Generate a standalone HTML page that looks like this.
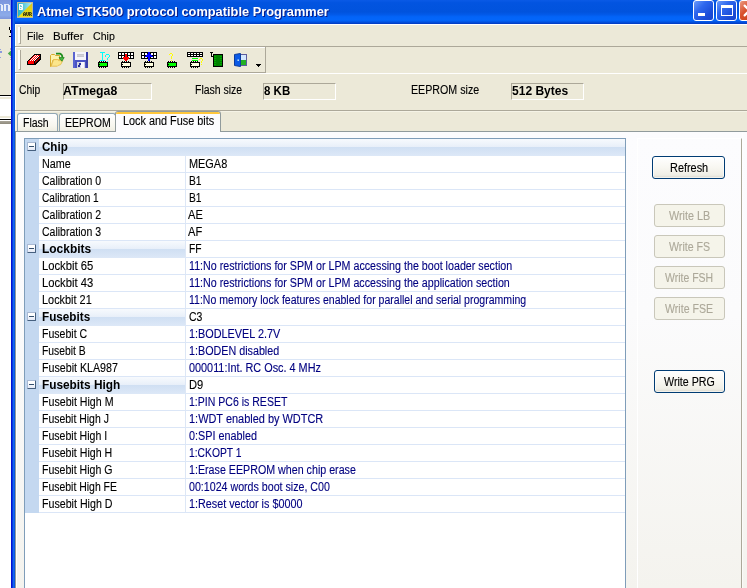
<!DOCTYPE html>
<html><head><meta charset="utf-8"><title>Atmel STK500 protocol compatible Programmer</title>
<style>
*{margin:0;padding:0;box-sizing:border-box}
html,body{width:747px;height:588px;overflow:hidden;background:#ece9d8;font-family:"Liberation Sans",sans-serif;font-size:11px;color:#000}
.a{position:absolute}
.t{position:absolute;white-space:pre;transform-origin:0 50%;-webkit-text-stroke:.12px}
#tx{left:0;top:0;width:747px;height:588px;will-change:transform}
.ttl{text-shadow:1px 1px 0 #0a1883}
#bgt{left:0;top:0;width:11px;height:19px;background:linear-gradient(#7b95dd,#84a1e5 45%,#8cabe9 80%,#7d95da)}
#title{left:11px;top:0;width:736px;height:24px;background:linear-gradient(#0a5ae6 0,#0254e0 12%,#0153dd 50%,#0259e8 60%,#0364f8 70%,#0366fa 84%,#0252e0 92%,#0238c0 100%)}
#lb{left:11px;top:0;width:4px;height:588px;background:linear-gradient(90deg,#0012d4 0,#0012d4 25%,#0838e0 25%,#0838e0 50%,#1566ee 50%,#1566ee 75%,#0a58e2 75%)}
.hl{background:#fff}.sh{background:#aca899}
.grip{width:3px;border-left:2px solid #fff;border-right:1px solid #aca899;border-bottom:1px solid #aca899}
.fld{height:17px;border:1px solid;border-color:#aca899 #fff #fff #aca899}
.tab{border:1px solid #91a7b4;border-bottom:none;border-radius:3px 3px 0 0;background:linear-gradient(#fff,#f7f6ee 70%,#efeee2)}
.cb{top:0;width:21px;height:21px;border:1px solid #fff;border-radius:3px}
.gl{left:39px;width:586px;height:1px;background:#dbe6f7}
.hd{left:39px;width:146px;height:17px;background:linear-gradient(#f7fafd 0,#e8eff9 46%,#cfdff3 47%,#dde8f7 100%)}
.hd.full{width:586px}
.pm{left:27px;width:9px;height:9px;border:1px solid;border-color:#a9b9d3 #46607f #46607f #a9b9d3;border-radius:1px;background:linear-gradient(#fff 30%,#e3e9f6)}
.pm i{position:absolute;left:1px;top:3px;width:5px;height:1px;background:#34506f}
.btn{height:23px;border-radius:3px}
.btn.on{border:1px solid #003c74;background:linear-gradient(#fff,#f8f7f1 50%,#efeee6 86%,#dad7cb);box-shadow:inset 0 0 0 1px rgba(255,255,255,.6)}
.btn.off{border:1px solid #c9c7ba;background:#f5f4ea}
svg{position:absolute;overflow:visible}
</style></head><body>
<div class="a" id="bgt"></div>
<div class="a" style="left:1px;top:5px;width:2px;height:6px;background:#e6ecfa"></div>
<div class="a" style="left:0;top:4px;width:2px;height:1px;background:#d6e0f6"></div>
<div class="a" style="left:4px;top:4px;width:2px;height:7px;background:#e6ecfa"></div>
<div class="a" style="left:6px;top:4px;width:3px;height:1px;background:#dce4f8"></div>
<div class="a" style="left:8px;top:5px;width:2px;height:6px;background:#e6ecfa"></div>
<div class="a" style="left:10px;top:19px;width:1px;height:76px;background:#f6f1de"></div>
<div class="a" style="left:9px;top:27px;width:1px;height:3px;background:#000"></div>
<div class="a" style="left:10px;top:30px;width:1px;height:3px;background:#000"></div>
<div class="a" style="left:9px;top:36px;width:2px;height:1px;background:#000"></div>
<svg class="a" style="left:0;top:44px" width="11" height="20" viewBox="0 44 11 20"><polygon points="11,50.5 7.8,53.5 11,56.5" fill="#4aa84a"/><rect x="0" y="49" width="1" height="1" fill="#98a4dc"/><rect x="0" y="51" width="2" height="2" fill="#8c9ade"/><rect x="0" y="57" width="1" height="1" fill="#98a4dc"/><rect x="10" y="48" width="1" height="2" fill="#b8b4a4"/><rect x="10" y="57" width="1" height="1" fill="#b8b4a4"/><rect x="10" y="59" width="1" height="1" fill="#b8b4a4"/></svg>
<div class="a" style="left:0;top:95px;width:11px;height:493px;background:#fff"></div>
<div class="a" style="left:0;top:95px;width:11px;height:1px;background:#000"></div>
<div class="a" style="left:0;top:97px;width:11px;height:2px;background:#ece9d8"></div>
<div class="a" style="left:0;top:116px;width:11px;height:2px;background:#ece9d8"></div>
<div class="a" style="left:0;top:119px;width:11px;height:1px;background:#000"></div>
<div class="a" style="left:0;top:121px;width:11px;height:3px;background:linear-gradient(#aaa69a,#8e8a7c)"></div>
<div class="a" id="title"></div>
<div class="a" id="lb"></div>
<div class="a hl" style="left:15px;top:24px;width:732px;height:1px"></div>
<div class="a hl" style="left:15px;top:24px;width:1px;height:564px"></div>
<!-- caption buttons -->
<div class="a cb" style="left:693px;background:linear-gradient(135deg,#6c9cfa 0,#2f68ee 35%,#1a4cd8 75%,#1a44cc)"><div class="a" style="left:4px;top:12px;width:7px;height:3px;background:#fff"></div></div>
<div class="a cb" style="left:716px;background:linear-gradient(135deg,#6c9cfa 0,#2f68ee 35%,#1a4cd8 75%,#1a44cc)"><div class="a" style="left:4px;top:4px;width:12px;height:11px;border:1px solid #fff;border-top-width:3px"></div></div>
<div class="a cb" style="left:739px;background:linear-gradient(135deg,#ec9a82,#d8502c 40%,#c23a12)"></div>
<svg class="a" style="left:739px;top:0" width="8" height="21" viewBox="739 0 8 21"><path d="M744.6 5.6 L754 15 M744.6 15.4 L754 6" stroke="#fff" stroke-width="2.2" stroke-linecap="round"/></svg>
<!-- menu bar -->
<div class="a grip" style="left:18px;top:27px;height:17px"></div>
<div class="a sh" style="left:15px;top:46px;width:732px;height:1px"></div>
<div class="a hl" style="left:15px;top:47px;width:250px;height:1px"></div>
<!-- toolbar -->
<div class="a grip" style="left:18px;top:50px;height:20px"></div>
<div class="a sh" style="left:15px;top:72px;width:251px;height:1px"></div>
<div class="a hl" style="left:15px;top:73px;width:732px;height:1px"></div>
<div class="a sh" style="left:265px;top:47px;width:1px;height:26px"></div>
<!-- info fields -->
<div class="a fld" style="left:63px;top:83px;width:89px"></div>
<div class="a fld" style="left:263px;top:83px;width:73px"></div>
<div class="a fld" style="left:511px;top:83px;width:73px"></div>
<!-- tab control -->
<div class="a" style="left:15px;top:110px;width:732px;height:1px;background:#aca899"></div>
<div class="a" style="left:15px;top:111px;width:732px;height:1px;background:#f5f3e6"></div>
<div class="a" style="left:15px;top:111px;width:2px;height:20px;background:#f6f0da"></div>
<div class="a" style="left:15px;top:131px;width:732px;height:457px;background:linear-gradient(#fcfcfe,#fbfbfc 40%,#f4f3ee);border-top:1px solid #919b9c;border-left:1px solid #919b9c"></div>
<div class="a hl" style="left:16px;top:132px;width:1px;height:456px"></div>
<div class="a tab" style="left:17px;top:113px;width:41px;height:18px"></div>
<div class="a tab" style="left:59px;top:113px;width:57px;height:18px"></div>
<div class="a" style="left:115px;top:111px;width:106px;height:21px;border:1px solid #919b9c;border-bottom:none;border-radius:3px 3px 0 0;background:#fcfcfe;overflow:hidden"><div class="a" style="left:-1px;top:-1px;width:106px;height:3px;background:linear-gradient(#e68b2c 0,#e68b2c 34%,#ffc73c 34%)"></div></div>
<svg class="a" style="left:0;top:0" width="747" height="80" viewBox="0 0 747 80" shape-rendering="crispEdges">
<defs><linearGradient id="tq" x1="0" y1="0" x2="1" y2="0"><stop offset="0" stop-color="#22b4c6"/><stop offset="1" stop-color="#b4ecf4"/></linearGradient><linearGradient id="yl" x1="0" y1="0" x2="0" y2="1"><stop offset="0" stop-color="#d8c818"/><stop offset="1" stop-color="#ece018"/></linearGradient></defs>
<rect x="17" y="2" width="16" height="16" fill="#bcb89c"/>
<rect x="18" y="3" width="14" height="14" fill="url(#yl)"/>
<polygon points="18,3 32,3 18,17" fill="url(#tq)" shape-rendering="geometricPrecision"/>
<rect x="19" y="4" width="3" height="1" fill="#ffffff"/>
<rect x="22" y="4" width="1" height="1" fill="#e0f4f8"/>
<rect x="19" y="5" width="1" height="1" fill="#ffffff"/>
<rect x="20" y="5" width="1" height="1" fill="#7ac8d4"/>
<rect x="21" y="5" width="1" height="1" fill="#e0f4f8"/>
<rect x="22" y="5" width="1" height="1" fill="#ffffff"/>
<rect x="19" y="6" width="1" height="1" fill="#ffffff"/>
<rect x="20" y="6" width="2" height="1" fill="#7ac8d4"/>
<rect x="22" y="6" width="1" height="1" fill="#ffffff"/>
<rect x="19" y="7" width="3" height="1" fill="#ffffff"/>
<rect x="22" y="7" width="1" height="1" fill="#e0f4f8"/>
<rect x="19" y="8" width="1" height="1" fill="#ffffff"/>
<rect x="20" y="8" width="1" height="1" fill="#7ac8d4"/>
<rect x="21" y="8" width="1" height="1" fill="#e0f4f8"/>
<rect x="22" y="8" width="1" height="1" fill="#ffffff"/>
<rect x="19" y="9" width="3" height="1" fill="#ffffff"/>
<rect x="22" y="9" width="1" height="1" fill="#e0f4f8"/>
<rect x="23" y="12" width="9" height="4" fill="#5a5610" fill-opacity=".35"/>
<rect x="24" y="12" width="1" height="1" fill="#4a4812"/>
<rect x="26" y="12" width="1" height="1" fill="#4a4812"/>
<rect x="28" y="12" width="1" height="1" fill="#4a4812"/>
<rect x="29" y="12" width="2" height="1" fill="#4a4812"/>
<rect x="23" y="13" width="1" height="1" fill="#4a4812"/>
<rect x="25" y="13" width="1" height="1" fill="#4a4812"/>
<rect x="26" y="13" width="1" height="1" fill="#4a4812"/>
<rect x="28" y="13" width="1" height="1" fill="#4a4812"/>
<rect x="29" y="13" width="1" height="1" fill="#4a4812"/>
<rect x="31" y="13" width="1" height="1" fill="#4a4812"/>
<rect x="23" y="14" width="3" height="1" fill="#4a4812"/>
<rect x="26" y="14" width="1" height="1" fill="#4a4812"/>
<rect x="28" y="14" width="1" height="1" fill="#4a4812"/>
<rect x="29" y="14" width="2" height="1" fill="#4a4812"/>
<rect x="23" y="15" width="1" height="1" fill="#4a4812"/>
<rect x="25" y="15" width="1" height="1" fill="#4a4812"/>
<rect x="27" y="15" width="1" height="1" fill="#4a4812"/>
<rect x="29" y="15" width="1" height="1" fill="#4a4812"/>
<rect x="31" y="15" width="1" height="1" fill="#4a4812"/>
<polygon points="34,54 41,54 41,59 35,65 27,65 27,61" fill="#000"/>
<polygon points="35,55 40,55 34,61 28,61" fill="#ff0000"/>
<rect x="28" y="61" width="6" height="3" fill="#ff0000"/>
<polygon points="35,61.5 40,56.5 40,58 35,63.5" fill="#a80000"/>
<rect x="35" y="55" width="1" height="1" fill="#fff"/>
<rect x="37" y="55" width="1" height="1" fill="#fff"/>
<rect x="34" y="56" width="1" height="1" fill="#fff"/>
<rect x="36" y="56" width="1" height="1" fill="#fff"/>
<rect x="38" y="56" width="1" height="1" fill="#fff"/>
<rect x="33" y="57" width="1" height="1" fill="#fff"/>
<rect x="35" y="57" width="1" height="1" fill="#fff"/>
<rect x="37" y="57" width="1" height="1" fill="#fff"/>
<rect x="32" y="58" width="1" height="1" fill="#fff"/>
<rect x="34" y="58" width="1" height="1" fill="#fff"/>
<rect x="36" y="58" width="1" height="1" fill="#fff"/>
<rect x="31" y="59" width="1" height="1" fill="#fff"/>
<rect x="33" y="59" width="1" height="1" fill="#fff"/>
<rect x="35" y="59" width="1" height="1" fill="#fff"/>
<rect x="30" y="60" width="1" height="1" fill="#fff"/>
<rect x="32" y="60" width="1" height="1" fill="#fff"/>
<rect x="34" y="60" width="1" height="1" fill="#fff"/>
<g shape-rendering="geometricPrecision">
<path d="M50.5 66.5 L50.5 55.5 L51.5 54.5 L54.5 54.5 L55.5 55.5 L59.5 55.5 L59.5 60 L53 60 L51 66.5 Z" fill="#fdf2b0" stroke="#d6aa2c" stroke-width="1"/>
<path d="M51.2 66.2 L53.6 59.6 L57.6 59.6 L58.6 60.6 L62.8 60.6 L60.6 64.6 L58.2 65.4 L57.4 66.2 Z" fill="#fbe68c" stroke="#e6bc4c" stroke-width=".9"/>
<path d="M56 53.6 L60 53.6 Q62.4 54.4 62.4 57.6" fill="none" stroke="#1c8c1c" stroke-width="1.7"/>
<path d="M59.2 57.6 L64.2 57.6 L61.8 61.2 Z" fill="#48bc44" stroke="#1c861c" stroke-width=".8"/>
</g>
<g shape-rendering="geometricPrecision"><rect x="73" y="52" width="15" height="16" rx="1.5" fill="#4a54c4"/>
<rect x="73" y="52" width="2" height="16" fill="#5a64d0"/><rect x="86" y="52" width="2" height="16" fill="#3a40aa"/></g>
<rect x="75" y="52" width="11" height="8" fill="#f4f4fa"/>
<rect x="77" y="54" width="7" height="3" fill="#c6c6d0"/>
<rect x="77" y="55" width="7" height="1" fill="#d2d2da"/>
<rect x="77" y="62" width="8" height="6" fill="#d4d4e2"/>
<polygon points="79,62.5 81,62.5 80,66.5 78,66.5" fill="#2c329c"/>
<rect x="81" y="62" width="3" height="6" fill="#f8f8ff"/>
<rect x="100" y="52" width="5" height="1" fill="#00ffff"/>
<rect x="102" y="53" width="1" height="7" fill="#00ffff"/>
<rect x="100" y="60" width="5" height="1" fill="#00ffff"/>
<rect x="106" y="54" width="3" height="1" fill="#00ffff"/>
<rect x="105" y="55" width="1" height="1" fill="#00ffff"/>
<rect x="109" y="55" width="1" height="1" fill="#00ffff"/>
<rect x="105" y="56" width="1" height="1" fill="#00ffff"/>
<rect x="109" y="56" width="1" height="1" fill="#00ffff"/>
<rect x="108" y="57" width="1" height="1" fill="#00ffff"/>
<rect x="107" y="58" width="1" height="1" fill="#00ffff"/>
<rect x="107" y="59" width="1" height="1" fill="#00ffff"/>
<rect x="107" y="61" width="1" height="1" fill="#00ffff"/>
<rect x="98" y="62" width="10" height="5" fill="#000"/>
<rect x="99" y="61" width="1" height="1" fill="#000"/>
<rect x="99" y="67" width="1" height="1" fill="#000"/>
<rect x="101" y="61" width="1" height="1" fill="#000"/>
<rect x="101" y="67" width="1" height="1" fill="#000"/>
<rect x="103" y="61" width="1" height="1" fill="#000"/>
<rect x="103" y="67" width="1" height="1" fill="#000"/>
<rect x="105" y="61" width="1" height="1" fill="#000"/>
<rect x="105" y="67" width="1" height="1" fill="#000"/>
<rect x="99" y="63" width="8" height="3" fill="#00ff00"/>
<rect x="99" y="64" width="1" height="1" fill="#000"/>
<rect x="118" y="52" width="16" height="7" fill="#000"/>
<rect x="119" y="53" width="2" height="2" fill="#fff"/>
<rect x="119" y="56" width="2" height="2" fill="#fff"/>
<rect x="122" y="53" width="2" height="2" fill="#fff"/>
<rect x="122" y="56" width="2" height="2" fill="#fff"/>
<rect x="125" y="53" width="2" height="2" fill="#fff"/>
<rect x="125" y="56" width="2" height="2" fill="#fff"/>
<rect x="128" y="53" width="2" height="2" fill="#fff"/>
<rect x="128" y="56" width="2" height="2" fill="#fff"/>
<rect x="131" y="53" width="2" height="2" fill="#fff"/>
<rect x="131" y="56" width="2" height="2" fill="#fff"/>
<rect x="125" y="54" width="2" height="3" fill="#ff0000"/>
<rect x="123" y="57" width="6" height="1" fill="#ff0000"/>
<rect x="123" y="58" width="6" height="1" fill="#ff0000"/>
<rect x="124" y="59" width="4" height="1" fill="#ff0000"/>
<rect x="125" y="60" width="2" height="1" fill="#ff0000"/>
<rect x="121" y="62" width="10" height="5" fill="#000"/>
<rect x="122" y="61" width="1" height="1" fill="#000"/>
<rect x="122" y="67" width="1" height="1" fill="#000"/>
<rect x="124" y="61" width="1" height="1" fill="#000"/>
<rect x="124" y="67" width="1" height="1" fill="#000"/>
<rect x="126" y="61" width="1" height="1" fill="#000"/>
<rect x="126" y="67" width="1" height="1" fill="#000"/>
<rect x="128" y="61" width="1" height="1" fill="#000"/>
<rect x="128" y="67" width="1" height="1" fill="#000"/>
<rect x="122" y="63" width="8" height="3" fill="#ffffe1"/>
<rect x="122" y="64" width="1" height="1" fill="#000"/>
<rect x="141" y="52" width="16" height="7" fill="#000"/>
<rect x="142" y="53" width="2" height="2" fill="#fff"/>
<rect x="142" y="56" width="2" height="2" fill="#fff"/>
<rect x="145" y="53" width="2" height="2" fill="#fff"/>
<rect x="145" y="56" width="2" height="2" fill="#fff"/>
<rect x="148" y="53" width="2" height="2" fill="#fff"/>
<rect x="148" y="56" width="2" height="2" fill="#fff"/>
<rect x="151" y="53" width="2" height="2" fill="#fff"/>
<rect x="151" y="56" width="2" height="2" fill="#fff"/>
<rect x="154" y="53" width="2" height="2" fill="#fff"/>
<rect x="154" y="56" width="2" height="2" fill="#fff"/>
<rect x="148" y="52" width="2" height="1" fill="#0000ff"/>
<rect x="148" y="53" width="2" height="1" fill="#0000ff"/>
<rect x="147" y="54" width="4" height="1" fill="#0000ff"/>
<rect x="146" y="55" width="6" height="1" fill="#0000ff"/>
<rect x="145" y="56" width="8" height="1" fill="#0000ff"/>
<rect x="148" y="57" width="2" height="4" fill="#0000ff"/>
<rect x="144" y="62" width="10" height="5" fill="#000"/>
<rect x="145" y="61" width="1" height="1" fill="#000"/>
<rect x="145" y="67" width="1" height="1" fill="#000"/>
<rect x="147" y="61" width="1" height="1" fill="#000"/>
<rect x="147" y="67" width="1" height="1" fill="#000"/>
<rect x="149" y="61" width="1" height="1" fill="#000"/>
<rect x="149" y="67" width="1" height="1" fill="#000"/>
<rect x="151" y="61" width="1" height="1" fill="#000"/>
<rect x="151" y="67" width="1" height="1" fill="#000"/>
<rect x="145" y="63" width="8" height="3" fill="#ffffe1"/>
<rect x="145" y="64" width="1" height="1" fill="#000"/>
<rect x="170" y="53" width="2" height="1" fill="#ffff00"/>
<rect x="169" y="54" width="1" height="1" fill="#ffff00"/>
<rect x="172" y="54" width="1" height="1" fill="#ffff00"/>
<rect x="172" y="55" width="1" height="1" fill="#ffff00"/>
<rect x="171" y="56" width="1" height="1" fill="#ffff00"/>
<rect x="171" y="57" width="1" height="1" fill="#ffff00"/>
<rect x="171" y="58" width="1" height="1" fill="#ffff00"/>
<rect x="171" y="60" width="1" height="1" fill="#ffff00"/>
<rect x="167" y="62" width="10" height="5" fill="#000"/>
<rect x="168" y="61" width="1" height="1" fill="#000"/>
<rect x="168" y="67" width="1" height="1" fill="#000"/>
<rect x="170" y="61" width="1" height="1" fill="#000"/>
<rect x="170" y="67" width="1" height="1" fill="#000"/>
<rect x="172" y="61" width="1" height="1" fill="#000"/>
<rect x="172" y="67" width="1" height="1" fill="#000"/>
<rect x="174" y="61" width="1" height="1" fill="#000"/>
<rect x="174" y="67" width="1" height="1" fill="#000"/>
<rect x="168" y="63" width="8" height="3" fill="#00ff00"/>
<rect x="168" y="64" width="1" height="1" fill="#000"/>
<rect x="187" y="52" width="16" height="5" fill="#000"/>
<rect x="188" y="53" width="2" height="1" fill="#fff"/>
<rect x="188" y="55" width="2" height="1" fill="#fff"/>
<rect x="191" y="53" width="2" height="1" fill="#fff"/>
<rect x="191" y="55" width="2" height="1" fill="#fff"/>
<rect x="194" y="53" width="2" height="1" fill="#fff"/>
<rect x="194" y="55" width="2" height="1" fill="#fff"/>
<rect x="197" y="53" width="2" height="1" fill="#fff"/>
<rect x="197" y="55" width="2" height="1" fill="#fff"/>
<rect x="200" y="53" width="2" height="1" fill="#fff"/>
<rect x="200" y="55" width="2" height="1" fill="#fff"/>
<rect x="192" y="58" width="6" height="1" fill="#00ff00"/>
<rect x="192" y="60" width="6" height="1" fill="#00ff00"/>
<rect x="190" y="62" width="10" height="5" fill="#000"/>
<rect x="191" y="61" width="1" height="1" fill="#000"/>
<rect x="191" y="67" width="1" height="1" fill="#000"/>
<rect x="193" y="61" width="1" height="1" fill="#000"/>
<rect x="193" y="67" width="1" height="1" fill="#000"/>
<rect x="195" y="61" width="1" height="1" fill="#000"/>
<rect x="195" y="67" width="1" height="1" fill="#000"/>
<rect x="197" y="61" width="1" height="1" fill="#000"/>
<rect x="197" y="67" width="1" height="1" fill="#000"/>
<rect x="191" y="63" width="8" height="3" fill="#ffffe1"/>
<rect x="191" y="64" width="1" height="1" fill="#000"/>
<rect x="200" y="58" width="2" height="1" fill="#ffff00"/>
<rect x="199" y="59" width="1" height="1" fill="#ffff00"/>
<rect x="202" y="59" width="1" height="1" fill="#ffff00"/>
<rect x="202" y="60" width="1" height="1" fill="#ffff00"/>
<rect x="201" y="61" width="1" height="1" fill="#ffff00"/>
<rect x="201" y="62" width="1" height="1" fill="#ffff00"/>
<rect x="201" y="64" width="1" height="1" fill="#ffff00"/>
<rect x="210" y="52" width="3" height="1" fill="#000"/>
<rect x="211" y="53" width="1" height="4" fill="#000"/>
<rect x="211" y="56" width="2" height="1" fill="#000"/>
<rect x="213" y="54" width="10" height="13" fill="#000"/>
<rect x="214" y="55" width="8" height="11" fill="#008000"/>
<rect x="214" y="56" width="2" height="1" fill="#00a800"/>
<rect x="220" y="56" width="2" height="1" fill="#00a800"/>
<rect x="214" y="58" width="2" height="1" fill="#00a800"/>
<rect x="220" y="58" width="2" height="1" fill="#00a800"/>
<rect x="214" y="60" width="2" height="1" fill="#00a800"/>
<rect x="220" y="60" width="2" height="1" fill="#00a800"/>
<rect x="214" y="62" width="2" height="1" fill="#00a800"/>
<rect x="220" y="62" width="2" height="1" fill="#00a800"/>
<rect x="214" y="64" width="2" height="1" fill="#00a800"/>
<rect x="220" y="64" width="2" height="1" fill="#00a800"/>
<g shape-rendering="geometricPrecision">
<rect x="240.5" y="54.5" width="6" height="11" fill="#d4e8ff" stroke="#5c5c9c" stroke-width="1"/>
<rect x="241" y="60" width="5" height="5" fill="#22b022"/>
<path d="M234.5 54.5 L240.5 53.5 L240.5 66.5 L234.5 65.5 Z" fill="#0a5ae6" stroke="#0c3c9c" stroke-width="1"/>
<rect x="237.5" y="59.5" width="1.4" height="1.4" fill="#dff"/>
</g>
<rect x="256" y="64" width="5" height="1" fill="#000"/>
<rect x="257" y="65" width="3" height="1" fill="#000"/>
<rect x="258" y="66" width="1" height="1" fill="#000"/>
</svg>
<!-- property grid -->
<div class="a" style="left:24px;top:138px;width:602px;height:460px;border:1px solid #7f9db9;background:#fff"></div>
<div class="a" style="left:25px;top:139px;width:14px;height:374px;background:#c4d8f0"></div>
<div class="a" style="left:185px;top:156px;width:1px;height:357px;background:#dde7f6"></div>
<div class="a hd full" style="top:139px"></div><div class="a pm" style="top:142px"><i></i></div>
<div class="a gl" style="top:172px"></div>
<div class="a gl" style="top:189px"></div>
<div class="a gl" style="top:206px"></div>
<div class="a gl" style="top:223px"></div>
<div class="a gl" style="top:240px"></div>
<div class="a hd" style="top:241px"></div><div class="a pm" style="top:244px"><i></i></div>
<div class="a gl" style="top:257px;left:186px;width:439px"></div>
<div class="a gl" style="top:274px"></div>
<div class="a gl" style="top:291px"></div>
<div class="a gl" style="top:308px"></div>
<div class="a hd" style="top:309px"></div><div class="a pm" style="top:312px"><i></i></div>
<div class="a gl" style="top:325px;left:186px;width:439px"></div>
<div class="a gl" style="top:342px"></div>
<div class="a gl" style="top:359px"></div>
<div class="a gl" style="top:376px"></div>
<div class="a hd" style="top:377px"></div><div class="a pm" style="top:380px"><i></i></div>
<div class="a gl" style="top:393px;left:186px;width:439px"></div>
<div class="a gl" style="top:410px"></div>
<div class="a gl" style="top:427px"></div>
<div class="a gl" style="top:444px"></div>
<div class="a gl" style="top:461px"></div>
<div class="a gl" style="top:478px"></div>
<div class="a gl" style="top:495px"></div>
<div class="a gl" style="top:512px"></div>
<!-- right panel -->
<div class="a" style="left:637px;top:138px;width:105px;height:460px;border-left:1px solid #fff;border-top:1px solid #fff;border-right:1px solid #aca899"></div>
<div class="a hl" style="left:742px;top:132px;width:1px;height:456px;opacity:.6"></div>
<div class="a btn on" style="left:652px;top:156px;width:73px"></div>
<div class="a btn off" style="left:654px;top:204px;width:71px"></div>
<div class="a btn off" style="left:654px;top:235px;width:71px"></div>
<div class="a btn off" style="left:654px;top:266px;width:71px"></div>
<div class="a btn off" style="left:654px;top:297px;width:71px"></div>
<div class="a btn on" style="left:654px;top:370px;width:71px"></div>
<div class="a" id="tx">
<div class="t ttl" style="left:37.3px;top:4.00px;font-size:13px;line-height:15px;transform:scaleX(0.9852);font-weight:bold;-webkit-text-stroke:0;color:#fff">Atmel STK500 protocol compatible Programmer</div>
<div class="t" style="left:27.1px;top:29.69px;font-size:11px;line-height:13px;transform:scaleX(0.9417)">File</div>
<div class="t" style="left:53.2px;top:29.69px;font-size:11px;line-height:13px;transform:scaleX(1.0461)">Buffer</div>
<div class="t" style="left:93.2px;top:29.69px;font-size:11px;line-height:13px;transform:scaleX(0.9635)">Chip</div>
<div class="t" style="left:19.4px;top:82.84px;font-size:12px;line-height:14px;transform:scaleX(0.8587)">Chip</div>
<div class="t" style="left:63.4px;top:83.84px;font-size:12px;line-height:14px;transform:scaleX(1.0199);font-weight:bold;-webkit-text-stroke:0">ATmega8</div>
<div class="t" style="left:195.4px;top:82.84px;font-size:12px;line-height:14px;transform:scaleX(0.8736)">Flash size</div>
<div class="t" style="left:264.4px;top:83.84px;font-size:12px;line-height:14px;transform:scaleX(0.9582);font-weight:bold;-webkit-text-stroke:0">8 KB</div>
<div class="t" style="left:410.6px;top:82.84px;font-size:12px;line-height:14px;transform:scaleX(0.8893)">EEPROM size</div>
<div class="t" style="left:512.4px;top:83.84px;font-size:12px;line-height:14px;transform:scaleX(1.0027);font-weight:bold;-webkit-text-stroke:0">512 Bytes</div>
<div class="t" style="left:23.3px;top:115.84px;font-size:12px;line-height:14px;transform:scaleX(0.8758)">Flash</div>
<div class="t" style="left:65.2px;top:115.84px;font-size:12px;line-height:14px;transform:scaleX(0.8786)">EEPROM</div>
<div class="t" style="left:123.0px;top:113.84px;font-size:12px;line-height:14px;transform:scaleX(0.9054)">Lock and Fuse bits</div>
<div class="t" style="left:670.0px;top:160.84px;font-size:12px;line-height:14px;transform:scaleX(0.9088)">Refresh</div>
<div class="t" style="left:669.0px;top:208.84px;font-size:12px;line-height:14px;transform:scaleX(0.8996);color:#aca899">Write LB</div>
<div class="t" style="left:669.0px;top:239.84px;font-size:12px;line-height:14px;transform:scaleX(0.8869);color:#aca899">Write FS</div>
<div class="t" style="left:665.4px;top:270.84px;font-size:12px;line-height:14px;transform:scaleX(0.8744);color:#aca899">Write FSH</div>
<div class="t" style="left:665.4px;top:301.84px;font-size:12px;line-height:14px;transform:scaleX(0.8852);color:#aca899">Write FSE</div>
<div class="t" style="left:664.2px;top:374.84px;font-size:12px;line-height:14px;transform:scaleX(0.8893)">Write PRG</div>
<div class="t" style="left:41.9px;top:139.84px;font-size:12px;line-height:14px;transform:scaleX(0.9636);font-weight:bold;-webkit-text-stroke:0">Chip</div>
<div class="t" style="left:41.9px;top:156.84px;font-size:12px;line-height:14px;transform:scaleX(0.8996)">Name</div>
<div class="t" style="left:189.0px;top:156.84px;font-size:12px;line-height:14px;transform:scaleX(0.9092)">MEGA8</div>
<div class="t" style="left:41.9px;top:173.84px;font-size:12px;line-height:14px;transform:scaleX(0.8757)">Calibration 0</div>
<div class="t" style="left:189.0px;top:173.84px;font-size:12px;line-height:14px;transform:scaleX(0.8579)">B1</div>
<div class="t" style="left:41.9px;top:190.84px;font-size:12px;line-height:14px;transform:scaleX(0.8416)">Calibration 1</div>
<div class="t" style="left:189.0px;top:190.84px;font-size:12px;line-height:14px;transform:scaleX(0.8579)">B1</div>
<div class="t" style="left:41.9px;top:207.84px;font-size:12px;line-height:14px;transform:scaleX(0.8757)">Calibration 2</div>
<div class="t" style="left:188.2px;top:207.84px;font-size:12px;line-height:14px;transform:scaleX(0.9241)">AE</div>
<div class="t" style="left:41.9px;top:224.84px;font-size:12px;line-height:14px;transform:scaleX(0.8757)">Calibration 3</div>
<div class="t" style="left:188.2px;top:224.84px;font-size:12px;line-height:14px;transform:scaleX(0.9255)">AF</div>
<div class="t" style="left:41.9px;top:241.84px;font-size:12px;line-height:14px;transform:scaleX(0.9971);font-weight:bold;-webkit-text-stroke:0">Lockbits</div>
<div class="t" style="left:189.0px;top:241.84px;font-size:12px;line-height:14px;transform:scaleX(0.8588)">FF</div>
<div class="t" style="left:41.9px;top:258.84px;font-size:12px;line-height:14px;transform:scaleX(0.9360)">Lockbit 65</div>
<div class="t" style="left:189.0px;top:258.84px;font-size:12px;line-height:14px;transform:scaleX(0.8913);color:#000080">11:No restrictions for SPM or LPM accessing the boot loader section</div>
<div class="t" style="left:41.9px;top:275.84px;font-size:12px;line-height:14px;transform:scaleX(0.9360)">Lockbit 43</div>
<div class="t" style="left:189.0px;top:275.84px;font-size:12px;line-height:14px;transform:scaleX(0.8912);color:#000080">11:No restrictions for SPM or LPM accessing the application section</div>
<div class="t" style="left:41.9px;top:292.84px;font-size:12px;line-height:14px;transform:scaleX(0.9085)">Lockbit 21</div>
<div class="t" style="left:189.0px;top:292.84px;font-size:12px;line-height:14px;transform:scaleX(0.8782);color:#000080">11:No memory lock features enabled for parallel and serial programming</div>
<div class="t" style="left:41.9px;top:309.84px;font-size:12px;line-height:14px;transform:scaleX(0.9768);font-weight:bold;-webkit-text-stroke:0">Fusebits</div>
<div class="t" style="left:189.0px;top:309.84px;font-size:12px;line-height:14px;transform:scaleX(0.8733)">C3</div>
<div class="t" style="left:41.9px;top:326.84px;font-size:12px;line-height:14px;transform:scaleX(0.8801)">Fusebit C</div>
<div class="t" style="left:189.0px;top:326.84px;font-size:12px;line-height:14px;transform:scaleX(0.9034);color:#000080">1:BODLEVEL 2.7V</div>
<div class="t" style="left:41.9px;top:343.84px;font-size:12px;line-height:14px;transform:scaleX(0.8619)">Fusebit B</div>
<div class="t" style="left:189.0px;top:343.84px;font-size:12px;line-height:14px;transform:scaleX(0.8956);color:#000080">1:BODEN disabled</div>
<div class="t" style="left:41.9px;top:360.84px;font-size:12px;line-height:14px;transform:scaleX(0.8889)">Fusebit KLA987</div>
<div class="t" style="left:189.0px;top:360.84px;font-size:12px;line-height:14px;transform:scaleX(0.9044);color:#000080">000011:Int. RC Osc. 4 MHz</div>
<div class="t" style="left:41.9px;top:377.84px;font-size:12px;line-height:14px;transform:scaleX(0.9856);font-weight:bold;-webkit-text-stroke:0">Fusebits High</div>
<div class="t" style="left:189.0px;top:377.84px;font-size:12px;line-height:14px;transform:scaleX(0.9255)">D9</div>
<div class="t" style="left:41.9px;top:394.84px;font-size:12px;line-height:14px;transform:scaleX(0.8860)">Fusebit High M</div>
<div class="t" style="left:189.0px;top:394.84px;font-size:12px;line-height:14px;transform:scaleX(0.8783);color:#000080">1:PIN PC6 is RESET</div>
<div class="t" style="left:41.9px;top:411.84px;font-size:12px;line-height:14px;transform:scaleX(0.8722)">Fusebit High J</div>
<div class="t" style="left:189.0px;top:411.84px;font-size:12px;line-height:14px;transform:scaleX(0.9120);color:#000080">1:WDT enabled by WDTCR</div>
<div class="t" style="left:41.9px;top:428.84px;font-size:12px;line-height:14px;transform:scaleX(0.8805)">Fusebit High I</div>
<div class="t" style="left:189.0px;top:428.84px;font-size:12px;line-height:14px;transform:scaleX(0.9018);color:#000080">0:SPI enabled</div>
<div class="t" style="left:41.9px;top:445.84px;font-size:12px;line-height:14px;transform:scaleX(0.8844)">Fusebit High H</div>
<div class="t" style="left:189.0px;top:445.84px;font-size:12px;line-height:14px;transform:scaleX(0.8603);color:#000080">1:CKOPT 1</div>
<div class="t" style="left:41.9px;top:462.84px;font-size:12px;line-height:14px;transform:scaleX(0.8807)">Fusebit High G</div>
<div class="t" style="left:189.0px;top:462.84px;font-size:12px;line-height:14px;transform:scaleX(0.8905);color:#000080">1:Erase EEPROM when chip erase</div>
<div class="t" style="left:41.9px;top:479.84px;font-size:12px;line-height:14px;transform:scaleX(0.8716)">Fusebit High FE</div>
<div class="t" style="left:189.0px;top:479.84px;font-size:12px;line-height:14px;transform:scaleX(0.8875);color:#000080">00:1024 words boot size, C00</div>
<div class="t" style="left:41.9px;top:496.84px;font-size:12px;line-height:14px;transform:scaleX(0.8882)">Fusebit High D</div>
<div class="t" style="left:189.0px;top:496.84px;font-size:12px;line-height:14px;transform:scaleX(0.8994);color:#000080">1:Reset vector is $0000</div>
</div>
</body></html>
